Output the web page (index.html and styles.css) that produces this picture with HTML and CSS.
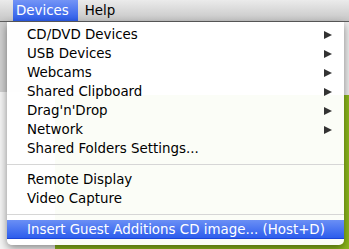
FILE: index.html
```html
<!DOCTYPE html>
<html>
<head>
<meta charset="utf-8">
<link rel="stylesheet" href="styles.css">
</head>
<body>
<div class="stage">
  <div class="menubar">
    <div class="title active">Devices</div>
    <div class="title">Help</div>
  </div>
  <div class="backdrop">
    <div class="win-left"></div>
    <div class="win-main">
      <div class="win-top"></div>
      <div class="win-green"></div>
    </div>
  </div>
  <div class="menu">
    <div class="item"><span>CD/DVD Devices</span><svg class="arrow" width="8" height="8" viewBox="0 0 8 8"><polygon points="0,0 8,4 0,8"/></svg></div>
    <div class="item"><span>USB Devices</span><svg class="arrow" width="8" height="8" viewBox="0 0 8 8"><polygon points="0,0 8,4 0,8"/></svg></div>
    <div class="item"><span>Webcams</span><svg class="arrow" width="8" height="8" viewBox="0 0 8 8"><polygon points="0,0 8,4 0,8"/></svg></div>
    <div class="item"><span>Shared Clipboard</span><svg class="arrow" width="8" height="8" viewBox="0 0 8 8"><polygon points="0,0 8,4 0,8"/></svg></div>
    <div class="item"><span>Drag'n'Drop</span><svg class="arrow" width="8" height="8" viewBox="0 0 8 8"><polygon points="0,0 8,4 0,8"/></svg></div>
    <div class="item"><span>Network</span><svg class="arrow" width="8" height="8" viewBox="0 0 8 8"><polygon points="0,0 8,4 0,8"/></svg></div>
    <div class="item"><span>Shared Folders Settings...</span></div>
    <div class="sep"></div>
    <div class="item"><span>Remote Display</span></div>
    <div class="item"><span>Video Capture</span></div>
    <div class="sep"></div>
    <div class="item selected"><span>Insert Guest Additions CD image... (Host+D)</span></div>
  </div>
</div>
</body>
</html>
```
FILE: styles.css
```css
html, body {
  margin: 0;
  padding: 0;
}
body {
  width: 349px;
  height: 249px;
  overflow: hidden;
  font-family: "DejaVu Sans", "Liberation Sans", sans-serif;
}
.stage {
  position: relative;
  width: 349px;
  height: 249px;
  display: flex;
  flex-direction: column;
  background: #ffffff;
}
.menubar {
  height: 21px;
  border-bottom: 1px solid #5e5e5e;
  background: linear-gradient(#ebebeb, #c6c6c6);
  display: flex;
  padding-left: 13px;
  flex: none;
}
.title {
  height: 21px;
  line-height: 21px;
  font-size: 13.4px;
  color: #000;
  padding: 0 8px 0 7px;
}
.title.active {
  color: #fff;
  padding: 0 9px 0 3px;
  background: linear-gradient(#7394f6, #2c5ce9);
}
.backdrop {
  flex: 1;
  display: flex;
}
.win-left {
  width: 55px;
  background: linear-gradient(#cfcfcf 0, #cfcfcf 70px, #f4f4f4 70px);
}
.win-main {
  flex: 1;
  display: flex;
  flex-direction: column;
}
.win-top {
  height: 73px;
  background: #ececec;
}
.win-green {
  flex: 1;
  background: #8cb81c;
}
.menu {
  position: absolute;
  left: 7px;
  top: 22px;
  width: 337px;
  padding: 3px 0 6px;
  background: rgba(255, 255, 255, 0.965);
  border-radius: 0 0 5px 5px;
  box-shadow: 0 3px 8px rgba(0, 0, 0, 0.45);
  display: flex;
  flex-direction: column;
}
.item {
  height: 19px;
  display: flex;
  align-items: center;
  justify-content: space-between;
  padding: 0 12px 0 20px;
  font-size: 13.4px;
  color: #000;
  white-space: nowrap;
}
.arrow {
  fill: #333;
  flex: none;
}
.sep {
  height: 12px;
  display: flex;
  align-items: center;
}
.sep::after {
  content: "";
  display: block;
  width: 100%;
  height: 1px;
  background: #d6d6d6;
}
.item.selected {
  color: #fff;
  background: linear-gradient(#6a8ff5, #2d5ded);
  border-bottom: 1px solid #1c45d6;
  height: 18px;
}
```
